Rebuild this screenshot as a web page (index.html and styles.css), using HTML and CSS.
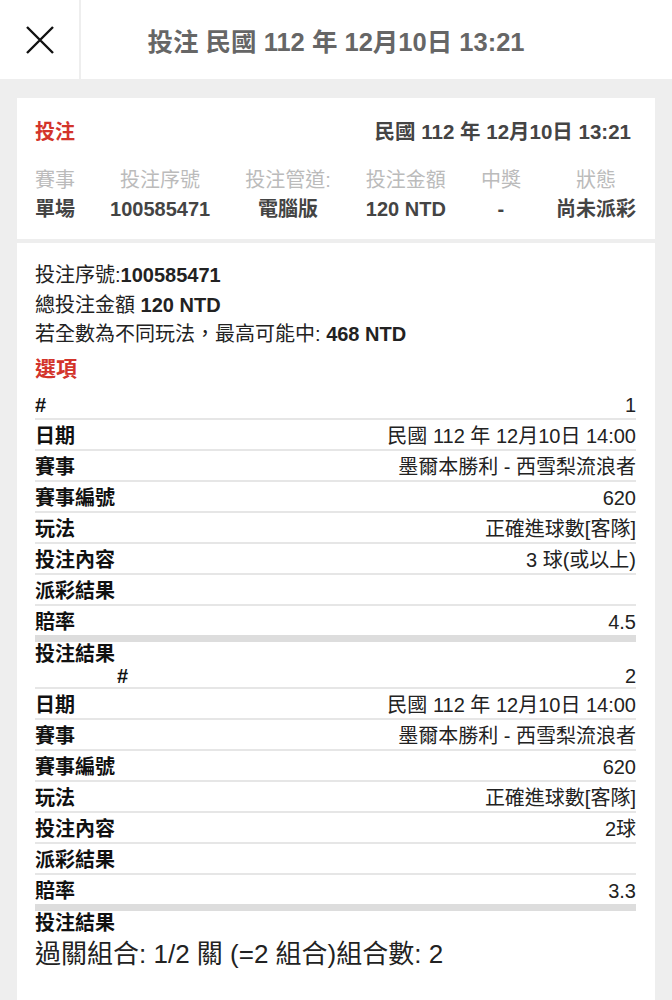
FILE: index.html
```html
<!DOCTYPE html>
<html lang="zh-Hant">
  <head>
    <meta charset="UTF-8" />
    <meta name="viewport" content="width=device-width, initial-scale=1.0" />
    <title>投注</title>
    <link rel="stylesheet" href="styles.css">
  </head>
  <body>
    <!-- Top bar -->
    <header class="topbar">
      <button class="close-btn" aria-label="close">
        <svg width="28" height="28" viewBox="0 0 28 28">
          <path d="M1 1 L27 27 M27 1 L1 27" stroke="#111" stroke-width="2.4" fill="none" />
        </svg>
      </button>
      <h1 class="topbar-title">投注 民國 112 年 12月10日 13:21</h1>
      <span></span>
    </header>

    <main class="page">
      <!-- Summary card -->
      <section class="card summary">
        <div class="summary-head">
          <span class="tag">投注</span>
          <span class="summary-date">民國 112 年 12月10日 13:21</span>
        </div>
        <div class="summary-cols">
          <div class="col"><span class="col-label">賽事</span><span class="col-value">單場</span></div>
          <div class="col"><span class="col-label">投注序號</span><span class="col-value">100585471</span></div>
          <div class="col"><span class="col-label">投注管道:</span><span class="col-value">電腦版</span></div>
          <div class="col"><span class="col-label">投注金額</span><span class="col-value">120 NTD</span></div>
          <div class="col"><span class="col-label">中獎</span><span class="col-value">-</span></div>
          <div class="col"><span class="col-label">狀態</span><span class="col-value">尚未派彩</span></div>
        </div>
      </section>

      <!-- Detail card -->
      <section class="card detail">
        <p class="line">投注序號:<b>100585471</b></p>
        <p class="line">總投注金額 <b>120 NTD</b></p>
        <p class="line">若全數為不同玩法，最高可能中: <b>468 NTD</b></p>
        <h2 class="section-title">選項</h2>

        <div class="leg">
          <div class="row"><span class="row-label">#</span><span>1</span></div>
          <div class="row"><span class="row-label">日期</span><span>民國 112 年 12月10日 14:00</span></div>
          <div class="row"><span class="row-label">賽事</span><span>墨爾本勝利 - 西雪梨流浪者</span></div>
          <div class="row"><span class="row-label">賽事編號</span><span>620</span></div>
          <div class="row"><span class="row-label">玩法</span><span>正確進球數[客隊]</span></div>
          <div class="row"><span class="row-label">投注內容</span><span>3 球(或以上)</span></div>
          <div class="row"><span class="row-label">派彩結果</span><span></span></div>
          <div class="row odds"><span class="row-label">賠率</span><span>4.5</span></div>
          <div class="result-label">投注結果</div>
        </div>

        <div class="leg">
          <div class="row shifted"><span class="row-label">#</span><span>2</span></div>
          <div class="row"><span class="row-label">日期</span><span>民國 112 年 12月10日 14:00</span></div>
          <div class="row"><span class="row-label">賽事</span><span>墨爾本勝利 - 西雪梨流浪者</span></div>
          <div class="row"><span class="row-label">賽事編號</span><span>620</span></div>
          <div class="row"><span class="row-label">玩法</span><span>正確進球數[客隊]</span></div>
          <div class="row"><span class="row-label">投注內容</span><span>2球</span></div>
          <div class="row"><span class="row-label">派彩結果</span><span></span></div>
          <div class="row odds"><span class="row-label">賠率</span><span>3.3</span></div>
          <div class="result-label">投注結果</div>
        </div>

        <p class="combo">過關組合: 1/2 關 (=2 組合)組合數: 2</p>
      </section>
    </main>
  </body>
</html>
```

FILE: styles.css
```css
/* General styles */
body,
html {
  margin: 0;
  padding: 0;
  font-family: "Liberation Sans", "Noto Sans CJK TC", sans-serif;
  background-color: #eeeeee;
  color: #222;
}

/* Top bar */
.topbar {
  display: grid;
  grid-template-columns: 81px 1fr 81px;
  height: 79px;
  background-color: #ffffff;
}
.close-btn {
  display: flex;
  align-items: center;
  justify-content: center;
  padding: 0;
  border: none;
  border-right: 2px solid #eeeeee;
  background: none;
  cursor: pointer;
}
.topbar-title {
  margin: 0;
  align-self: center;
  text-align: center;
  font-size: 25.5px;
  font-weight: bold;
  color: #666;
}

/* Cards */
.page {
  padding: 19px 17px 0;
}
.card {
  background-color: #ffffff;
  padding: 20px 19px 15px 18px;
}

/* Summary card */
.summary-head {
  display: flex;
  justify-content: space-between;
  align-items: baseline;
  line-height: 28px;
  font-size: 20px;
  font-weight: bold;
}
.tag {
  color: #d3342b;
}
.summary-date {
  margin-right: 5px;
  font-size: 20.5px;
  color: #444;
}
.summary-cols {
  display: flex;
  justify-content: space-between;
  margin-top: 20px;
  font-size: 20px;
  line-height: 29px;
}
.col {
  display: flex;
  flex-direction: column;
  align-items: center;
}
.col-label {
  color: #bbbbbb;
}
.col-value {
  color: #444;
  font-weight: bold;
}

/* Detail card */
.detail {
  margin-top: 4px;
  padding-top: 18px;
  padding-bottom: 60px;
  font-size: 20px;
}
.line {
  margin: 0;
  line-height: 29.5px;
}
.section-title {
  margin: 5.5px 0 6px;
  font-size: 21px;
  line-height: 28px;
  color: #d3342b;
}
.row {
  display: flex;
  justify-content: space-between;
  padding-top: 4px;
  line-height: 25px;
  border-bottom: 2px solid #e6e6e6;
}
.row-label {
  font-weight: bold;
  color: #111;
}
.row.odds {
  border-bottom: 7px solid #dddddd;
}
.row.shifted {
  padding-top: 1px;
  line-height: 22px;
}
.row.shifted .row-label {
  padding-left: 82px;
}
.result-label {
  padding-top: 2px;
  line-height: 20px;
  font-weight: bold;
  color: #111;
}
.combo {
  margin: 6px 0 0;
  font-size: 26px;
  line-height: 30px;
  color: #222;
}
```
